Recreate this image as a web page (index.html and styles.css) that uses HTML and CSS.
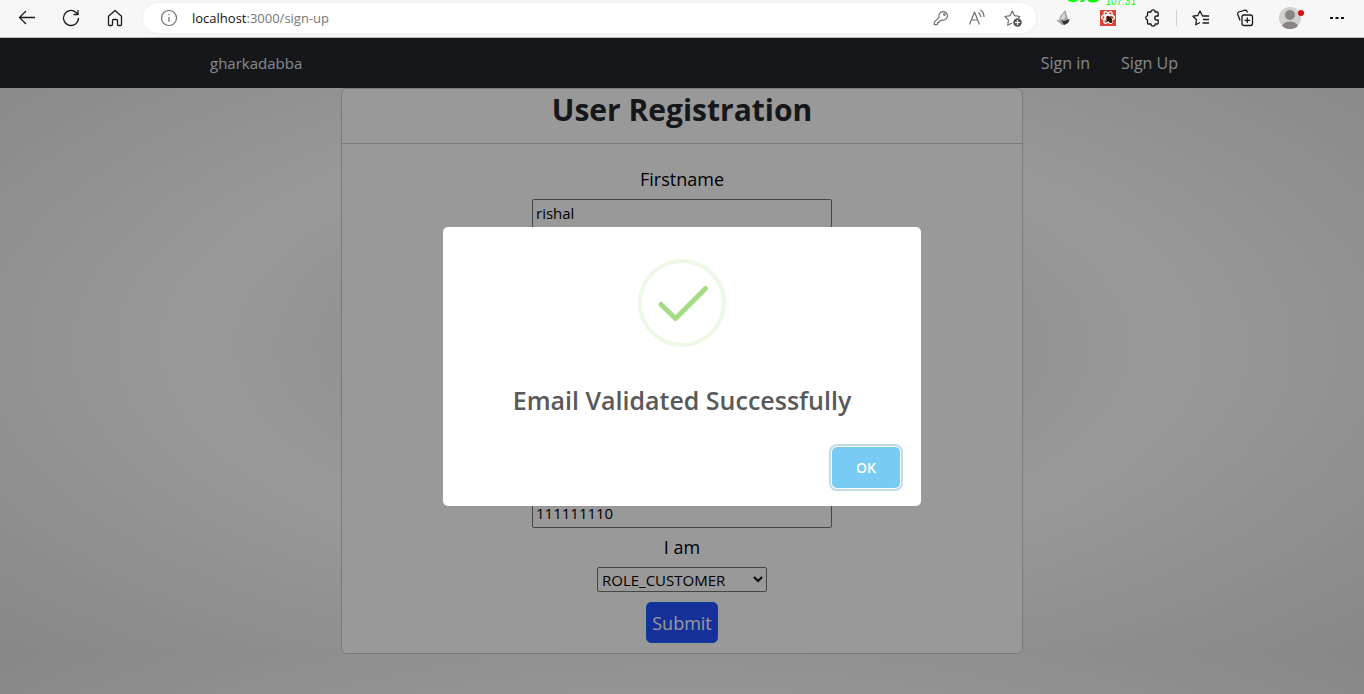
FILE: index.html
```html
<!DOCTYPE html>
<html lang="en">
<head>
<meta charset="utf-8">
<meta name="viewport" content="width=device-width, initial-scale=1">
<title>gharkadabba</title>
<link rel="stylesheet" href="styles.css">
</head>
<body>
<div class="window">
  <header class="toolbar">
    <button class="tool" type="button" aria-label="Back"><svg width="18" height="16" viewBox="0 0 18 16"><path d="M17 7.500H1.500M8 1 1.500 7.500 8 14"/></svg></button>
    <button class="tool" type="button" aria-label="Refresh"><svg width="18" height="18" viewBox="0 0 18 18"><path d="M16.500 9A7.500 7.500 0 1 1 14 3.400L16 5.500M16 1v4.500h-4.500"/></svg></button>
    <button class="tool" type="button" aria-label="Home"><svg width="16" height="18" viewBox="0 0 16 18"><path d="M1.500 7.200 8 1.500l6.500 5.700v8.300q0 1-1 1h-2q-1 0-1-1v-4q0-1-1-1h-3q-1 0-1 1v4q0 1-1 1h-2q-1 0-1-1z"/></svg></button>
    <div class="address">
      <button class="info" type="button" aria-label="Site information"><svg class="soft" width="18" height="18" viewBox="0 0 18 18"><circle cx="9" cy="9" r="7.500"/><path d="M9 8v5M9 5v1.300"/></svg></button>
      <div class="url"><span class="host">localhost</span>:3000/sign-up</div>
      <button class="addr-tool" type="button" aria-label="Passwords"><svg class="soft" width="16" height="16" viewBox="0 0 16 16"><path d="M6.100 7.300A4.300 4.300 0 1 1 9 10L7.500 11H6v1.500H4.500V14l-.7.700H1.300v-2.500z"/><circle cx="11.400" cy="4.600" r=".7"/></svg></button>
      <button class="addr-tool" type="button" aria-label="Read aloud"><svg class="soft" width="18" height="18" viewBox="0 0 18 18"><path d="M1.500 15.500 6.500 3l5 12.500M3.300 11h6.400M10.500 3.500q2.300 1.500 2.300 4.500M12.500 1q3.500 2.300 3.500 7"/></svg></button>
      <button class="addr-tool" type="button" aria-label="Add to favorites"><svg class="soft" width="18" height="18" viewBox="0 0 18 18"><path d="M8 14 3.700 16.200l.8-5L1 7.500l5-.8L8.300 2l2.300 4.700 5.200.8-1.600 1.600"/><circle class="dot" cx="13.500" cy="13.500" r="4.300"/><path class="plus" d="M11 13.500h5M13.500 11v5"/></svg></button>
    </div>
    <button class="tool" type="button" aria-label="Rocket extension"><svg width="16" height="18" viewBox="0 0 16 18"><path fill="#aaa" stroke="none" d="M9.500 1C6 5 3 8 3 12l3 4q6 0 7-5-2-3-3.500-10z"/><path fill="#e0e0e0" stroke="none" d="M8.500 4Q5 8 5 11l4-2z"/><path fill="#333" stroke="none" d="m5 11 3 1 6-2-2 4-4 2z"/><path stroke="#999" d="m1 11 5 4"/></svg></button>
    <button class="tool" type="button" aria-label="React extension"><svg width="16" height="16" viewBox="0 0 16 16"><path fill="#db4437" stroke="none" d="M0 0h16v16H0z"/><g stroke="#fff"><ellipse cx="8" cy="7.500" rx="6.500" ry="2.500"/><ellipse cx="8" cy="7.500" rx="6.500" ry="2.500" transform="rotate(60 8 7.500)"/><ellipse cx="8" cy="7.500" rx="6.500" ry="2.500" transform="rotate(120 8 7.500)"/></g><ellipse cx="9.500" cy="9.500" rx="2" ry="3.500" fill="#221" stroke="none" transform="rotate(-35 9.500 9.500)"/><path stroke="#221" d="m6 9 6 3M8 6l-1 6M11 6v7"/></svg></button>
    <button class="tool" type="button" aria-label="Extensions"><svg width="16" height="18" viewBox="0 0 16 18"><path d="M4.500 3H7a2.100 2.100 0 0 1 4.200 0h2q1 0 1 1v3h-1.400a2 2 0 0 0 0 4h1.400v3q0 1-1 1h-2a2.100 2.100 0 0 1-4.200 0H4.500q-1 0-1-1v-3a2.200 2.200 0 0 1 0-4.300V4q0-1 1-1z"/></svg></button>
    <span class="divider"></span>
    <button class="tool" type="button" aria-label="Favorites"><svg width="18" height="18" viewBox="0 0 18 18"><path d="M17 7h-6.500L8 2 5.800 6.500 1 7.200l3.500 3.500-.8 5.100L8 13.500M11 10.500h6M10.500 14H17"/></svg></button>
    <button class="tool" type="button" aria-label="Collections"><svg width="18" height="18" viewBox="0 0 18 18"><rect x="6" y="6" width="10.500" height="10.500" rx="2"/><path d="M11.300 8.500v5.500M8.500 11.300H14M4 11.500 1.700 5q-.4-1.500 1-2L9 1.200q1.500-.4 2 1l.4 1.300"/></svg></button>
    <button class="tool profile" type="button" aria-label="Profile"><svg width="24" height="26" viewBox="0 0 24 26"><circle cx="11" cy="13" r="11" fill="#d2d0ce" stroke="none"/><circle cx="11" cy="10" r="5" fill="#8a8583" stroke="none"/><path d="M3 21q2-4.500 8-4.500t8 4.500q-3 3-8 3t-8-3z" fill="#8a8583" stroke="none"/><circle cx="22" cy="8" r="3" fill="#e00b0b" stroke="none"/></svg></button>
    <button class="tool" type="button" aria-label="More"><svg width="14" height="4" viewBox="0 0 14 4"><path fill="#111" stroke="none" d="M0 1h3v2H0zM5.500 1h3v2h-3zM11 1h3v2h-3z"/></svg></button>
    <div class="meter"><svg width="32" height="3" viewBox="0 0 32 3"><path fill="#0f0" d="M0 0h10q-1 2-5 2T0 0zM13 0h4l-2 2h-3zM19 0h12q-2 3-6 2.500-4 0-6-2.500z"/></svg><span class="meter-value">107.31</span></div>
  </header>

  <div class="page">
    <nav class="navbar">
      <a class="brand" href="#">gharkadabba</a>
      <div class="nav-right"><a class="nav-link" href="#">Sign in</a><a class="nav-link" href="#">Sign Up</a></div>
    </nav>
    <main class="card">
      <h1 class="card-title">User Registration</h1>
      <form class="form">
        <label class="label" for="firstname">Firstname</label>
        <div class="fields">
          <input class="input" id="firstname" type="text" value="rishal">
          <input class="input" type="text" aria-label="Lastname">
          <input class="input" type="email" aria-label="Email">
          <input class="input" type="password" aria-label="Password">
          <input class="input" type="text" aria-label="Phone" value="111111110">
        </div>
        <label class="label" for="role">I am</label>
        <select class="select" id="role"><option>ROLE_CUSTOMER</option></select>
        <button class="submit" type="submit">Submit</button>
      </form>
    </main>
    <div class="overlay">
      <div class="modal" role="dialog" aria-labelledby="message">
        <svg class="success" width="88" height="88" viewBox="0 0 88 88"><circle cx="44" cy="44" r="42" fill="none" stroke="#edf8e7" stroke-width="4"/><path d="M23 45.500 37.500 59.500 67.500 29.500" fill="none" stroke="#a5dc86" stroke-width="5" stroke-linecap="round" stroke-linejoin="round"/></svg>
        <h2 class="message" id="message">Email Validated Successfully</h2>
        <div class="actions"><button class="ok" type="button">OK</button></div>
      </div>
    </div>
  </div>
</div>
</body>
</html>
```
FILE: styles.css
```css
* {
  box-sizing: border-box;
}

body {
  margin: 0;
  font-family: "Open Sans", "Noto Sans", sans-serif;
  font-size: 15px;
}

button,
input,
select {
  font-family: inherit;
}

.window {
  display: flex;
  flex-direction: column;
  min-height: 100vh;
}

/* Browser toolbar */
.toolbar {
  position: relative;
  display: flex;
  align-items: center;
  height: 38px;
  padding: 0 5px 2px;
  background: #f7f7f7;
  border-bottom: 1px solid #b8b8b8;
}

.tool,
.info,
.addr-tool {
  display: flex;
  flex: none;
  align-items: center;
  justify-content: center;
  width: 44px;
  height: 30px;
  padding: 0;
  border: 0;
  background: none;
}

.addr-tool {
  width: 36px;
}

.info {
  width: 18px;
}

.profile {
  width: 48px;
}

.toolbar svg {
  overflow: visible;
  fill: none;
  stroke: #1b1b1b;
  stroke-width: 1.3;
  stroke-linejoin: round;
}

.toolbar .soft {
  stroke: #6e6e6e;
  stroke-width: 1.2;
}

.soft .dot {
  fill: #555;
  stroke: none;
}

.soft .plus {
  stroke: #fff;
}

.address {
  display: flex;
  flex: 1;
  align-items: center;
  height: 30px;
  margin: 0 6px;
  padding: 0 5px 0 17px;
  border-radius: 15px;
  background: #fff;
  box-shadow: 0 0 3px #e6e6e6;
}

.url {
  flex: 1;
  padding-left: 14px;
  color: #767676;
  font-size: 13px;
  line-height: 20px;
}

.host {
  color: #111;
}

.divider {
  width: 1px;
  height: 16px;
  margin: 0 2px;
  background: #cfcfcf;
}

.meter {
  position: absolute;
  top: -4px;
  right: 228px;
  display: flex;
  gap: 5px;
  align-items: center;
}

.toolbar .meter svg {
  margin-top: -1px;
  stroke: none;
}

.meter-value {
  color: #0f0;
  font: 10px/11px "Liberation Sans", sans-serif;
}

/* Page */
.page {
  position: relative;
  flex: 1;
  padding-bottom: 40px;
  background: radial-gradient(#dedede, #fff, #e1e1e1) 0 0 / 100% 616px;
}

.navbar {
  display: flex;
  align-items: center;
  justify-content: space-between;
  height: 50px;
  padding: 0 186px 0 210px;
  background: #25272d;
}

.nav-right {
  display: flex;
  gap: 31px;
}

.brand,
.nav-link {
  color: #dee2e6;
  text-decoration: none;
}

.nav-link {
  font-size: 16px;
}

.card {
  width: 50%;
  margin: 0 auto;
  border: 1px solid #ccc;
  border-radius: 6px;
  background: #fff;
}

.card-title {
  margin: 0;
  padding-bottom: 12px;
  border-bottom: 1px solid #ccc;
  color: #25272d;
  font-size: 30px;
  line-height: 42px;
  text-align: center;
}

.form {
  display: flex;
  flex-direction: column;
  align-items: center;
  padding: 22px 16px 10px;
}

.label {
  margin-bottom: 6px;
  font-size: 18px;
  line-height: 27px;
}

.fields {
  display: grid;
  gap: 46px;
  width: 300px;
  max-width: 100%;
  margin-bottom: 6px;
}

.input {
  width: 100%;
  height: 29px;
  padding: 0 3px 1px;
  border: 1px solid #767676;
  border-radius: 2px;
  background: #fff;
  color: #000;
  font-size: 15px;
}

.select {
  width: 170px;
  height: 25px;
  border: 1px solid #767676;
  border-radius: 2px;
  background: #fff;
  color: #000;
  font-size: 15px;
}

.submit {
  height: 41px;
  margin-top: 10px;
  padding: 0 5px;
  border: 1px solid #0d6efd;
  border-radius: 5px;
  background: #2451fd;
  color: #fff;
  font-size: 18px;
}

/* Dialog */
.overlay {
  position: absolute;
  inset: 0;
  display: flex;
  align-items: center;
  justify-content: center;
  background: rgba(0, 0, 0, .4);
}

.modal {
  display: flex;
  flex-direction: column;
  align-items: center;
  width: 478px;
  max-width: 90%;
  padding-top: 32px;
  border-radius: 5px;
  background: #fff;
}

.message {
  margin: 34px 0 26px;
  color: #595959;
  font-size: 25px;
  font-weight: 600;
  line-height: 38px;
}

.actions {
  display: flex;
  justify-content: flex-end;
  width: 100%;
  padding: 2px 21px 18px;
}

.ok {
  height: 41px;
  padding: 0 24px;
  border: 0;
  border-radius: 5px;
  background: #78cbf2;
  box-shadow: 0 0 0 1px #fff, 0 0 0 3px #c2d9e8;
  color: #fff;
  font-size: 14px;
  font-weight: 600;
}
```
